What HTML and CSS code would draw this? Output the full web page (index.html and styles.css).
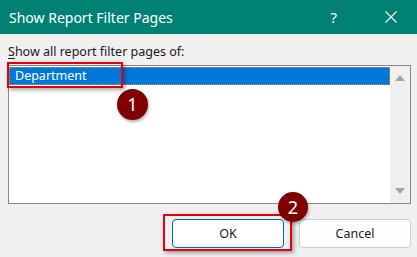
FILE: index.html
```html
<!DOCTYPE html>
<html lang="en">
<head>
  <meta charset="UTF-8" />
  <title>Show Report Filter Pages</title>
  <link rel="stylesheet" href="styles.css">
</head>
<body>

<div class="dialog">
  <!-- TITLE BAR -->
  <header class="titlebar">
    <h1>Show Report Filter Pages</h1>
    <span class="help">?</span>
    <span class="close">
      <svg width="12" height="12" viewBox="0 0 12 12">
        <path d="M0.5 0.5 L11.5 11.5 M11.5 0.5 L0.5 11.5" stroke="#fff" stroke-width="1.1" fill="none"/>
      </svg>
    </span>
  </header>

  <div class="content">
    <p class="label"><u>S</u>how all report filter pages of:</p>

    <div class="listbox">
      <ul class="items">
        <li class="selected">Department</li>
      </ul>
      <div class="scrollbar">
        <span class="arrow up"></span>
        <span class="arrow down"></span>
      </div>
    </div>

    <div class="buttons">
      <button class="btn primary">OK</button>
      <button class="btn">Cancel</button>
    </div>
  </div>

  <!-- annotations -->
  <div class="mark mark-list"></div>
  <div class="mark mark-ok"></div>
  <span class="badge badge-1">1</span>
  <span class="badge badge-2">2</span>
</div>

</body>
</html>
```

FILE: styles.css
```css
body {
  margin: 0;
  padding: 0;
  background: #f0f0f0;
  font-family: "Noto Sans", "Open Sans", sans-serif;
  color: #1a1a1a;
}
.dialog {
  position: relative;
  width: 417px;
  height: 257px;
  overflow: hidden;
}
.titlebar {
  height: 34px;
  background: #008272;
  color: white;
  display: flex;
  align-items: center;
  padding-left: 9px;
}
.titlebar h1 {
  flex: 1;
  margin: 0;
  font-size: 14px;
  font-weight: normal;
}
.help {
  font-size: 15px;
  margin-right: 48px;
}
.close {
  display: flex;
  margin-right: 20px;
}
.content {
  padding: 9px 6px 0 8px;
}
.label {
  margin: 0 0 4px;
  font-size: 12.5px;
  line-height: 18px;
}
.label u {
  text-underline-offset: 2px;
}
.listbox {
  height: 137px;
  border: 1px solid #86868b;
  background: white;
  display: flex;
}
.items {
  flex: 1;
  list-style: none;
  margin: 0;
  padding: 1px 0 0 0;
}
.items li {
  height: 16px;
  line-height: 15px;
  padding-left: 5px;
  font-size: 12.5px;
}
.items li.selected {
  background: #0078d7;
  color: white;
  border: 1px dotted #f08c1e;
}
.scrollbar {
  width: 20px;
  background: #f0f0f0;
  display: flex;
  flex-direction: column;
  justify-content: space-between;
  align-items: center;
  padding: 9px 0 9px;
}
.arrow {
  width: 0;
  height: 0;
  border-left: 5px solid transparent;
  border-right: 5px solid transparent;
}
.arrow.up {
  border-bottom: 6px solid #a3a3a3;
}
.arrow.down {
  border-top: 6px solid #a3a3a3;
}
.buttons {
  display: flex;
  justify-content: flex-end;
  gap: 15px;
  margin-top: 15px;
}
.btn {
  width: 112px;
  height: 29px;
  background: #fdfdfd;
  border: 1px solid #d0d0d0;
  border-radius: 4px;
  font-family: "Noto Sans", "Open Sans", sans-serif;
  font-size: 12.5px;
  color: #1a1a1a;
}
.btn.primary {
  background: #fff;
  border-color: #0067c0;
}
.mark {
  position: absolute;
  border: 2px solid #e8000b;
  box-shadow: 2px 2px 4px rgba(0, 0, 0, 0.35);
}
.mark-list {
  left: 7px;
  top: 62px;
  width: 112px;
  height: 22px;
}
.mark-ok {
  left: 163px;
  top: 214px;
  width: 125px;
  height: 33px;
}
.badge {
  position: absolute;
  width: 31px;
  height: 31px;
  border-radius: 50%;
  background: #800000;
  color: white;
  font-size: 18px;
  line-height: 31px;
  text-align: center;
  box-shadow: 1px 2px 3px rgba(0, 0, 0, 0.3);
}
.badge-1 {
  left: 117px;
  top: 89px;
}
.badge-2 {
  left: 278px;
  top: 192px;
  width: 30px;
  height: 30px;
  line-height: 30px;
}
```
